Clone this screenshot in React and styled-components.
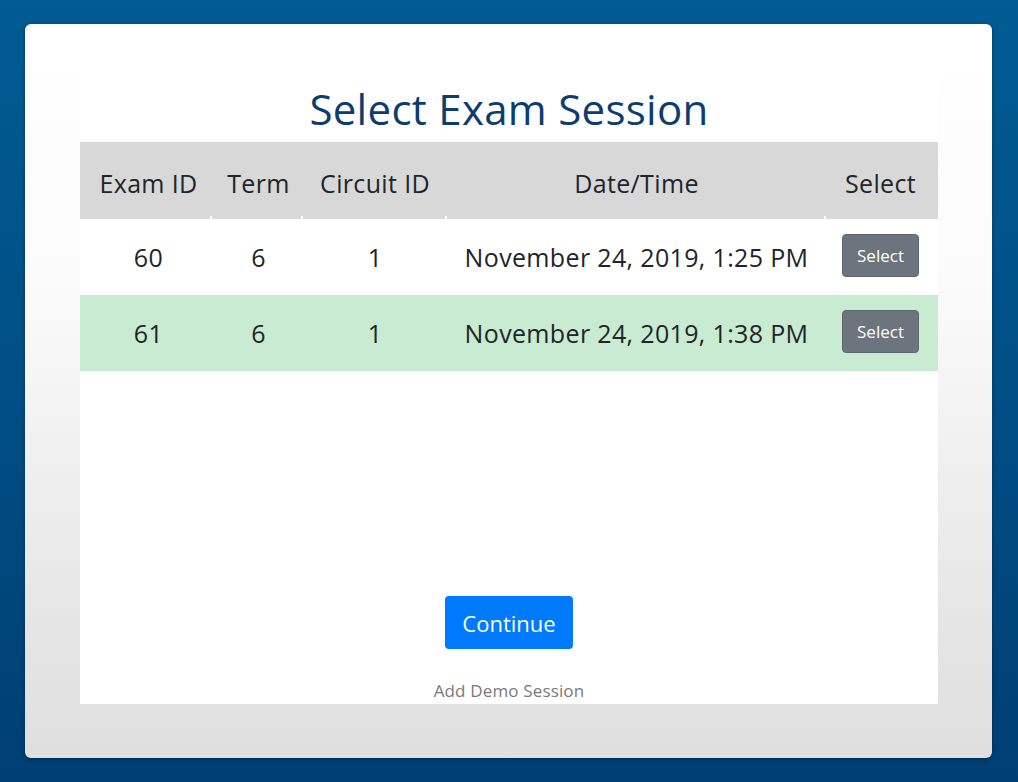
import React from "react";
import styled, { createGlobalStyle } from "styled-components";

const Global = createGlobalStyle`
  html, body { margin: 0; padding: 0; }
  body {
    font-family: "Open Sans", "Noto Sans", sans-serif;
    background: linear-gradient(180deg, #005c93 0%, #004f86 50%, #003f73 100%);
    min-height: 782px;
  }
`;

const Page = styled.div`
  box-sizing: border-box;
  height: 782px;
  padding: 24px 26px 24px 25px;
  display: flex;
`;

const Card = styled.div`
  flex: 1;
  box-sizing: border-box;
  border-radius: 6px;
  background: linear-gradient(180deg, #ffffff 0%, #fbfbfb 35%, #e6e6e6 80%, #dfdfdf 100%);
  box-shadow: 0 1px 4px rgba(0, 0, 0, 0.35);
  padding: 30px 54px 54px 55px;
  display: flex;
`;

const Panel = styled.div`
  flex: 1;
  background: #ffffff;
  display: flex;
  flex-direction: column;
  align-items: center;
`;

const Title = styled.h1`
  margin: 30px 0 8px;
  font-weight: 400;
  font-size: 42px;
  line-height: 50px;
  color: #0d3d6f;
  letter-spacing: 0.3px;
  flex-shrink: 0;
`;

const Table = styled.table`
  width: 100%;
  table-layout: fixed;
  border-collapse: collapse;
  color: #212529;
  font-size: 25px;
  letter-spacing: 0.35px;
  flex-shrink: 0;
`;

const Th = styled.th`
  background: #d8d8d8;
  font-weight: 400;
  height: 77px;
  padding: 5px ${(p) => p.$pr || 0}px 0 ${(p) => p.$pl || 0}px;
  box-sizing: border-box;
  width: ${(p) => p.$w}px;
  position: relative;
`;

const Notch = styled.span`
  position: absolute;
  right: -2px;
  bottom: 0;
  width: 4px;
  height: 3px;
  background: #ffffff;
`;

const Tr = styled.tr`
  background: ${(p) => (p.$active ? "#c8ebd1" : "#ffffff")};
`;

const Td = styled.td`
  box-sizing: border-box;
  height: 76px;
  padding: 0 ${(p) => p.$pr || 0}px ${(p) => p.$pb || 0}px ${(p) => p.$pl || 0}px;
  text-align: center;
`;

const SelectBtn = styled.button`
  font-family: inherit;
  width: 77px;
  height: 43px;
  border: 1px solid #5f676e;
  border-radius: 4px;
  background: #6c757d;
  color: #ffffff;
  font-size: 17px;
  padding: 0;
`;

const Continue = styled.button`
  font-family: inherit;
  flex-shrink: 0;
  margin-top: 225px;
  width: 128px;
  height: 53px;
  border: none;
  border-radius: 4px;
  background: #007bff;
  color: #ffffff;
  font-size: 22px;
  padding: 0;
`;

const DemoLink = styled.a`
  margin-top: 29px;
  font-size: 17px;
  line-height: 26px;
  color: #7a7a7a;
  letter-spacing: 0.15px;
  text-decoration: none;
`;

const cols = [
  { label: "Exam ID", w: 132, pl: 5 },
  { label: "Term", w: 91, pl: 2 },
  { label: "Circuit ID", w: 144 },
  { label: "Date/Time", w: 379 },
  { label: "Select", w: 112, pr: 3 },
];

const rows = [
  { id: 60, term: 6, circuit: 1, date: "November 24, 2019, 1:25 PM", active: false },
  { id: 61, term: 6, circuit: 1, date: "November 24, 2019, 1:38 PM", active: true },
];

export default function App() {
  return (
    <>
      <Global />
      <Page>
        <Card>
          <Panel>
            <Title>Select Exam Session</Title>
            <Table>
              <thead>
                <tr>
                  {cols.map((c, i) => (
                    <Th key={c.label} $w={c.w} $pl={c.pl} $pr={c.pr}>
                      {c.label}
                      {i < cols.length - 1 && <Notch />}
                    </Th>
                  ))}
                </tr>
              </thead>
              <tbody>
                {rows.map((r) => (
                  <Tr key={r.id} $active={r.active}>
                    <Td $pl={5}>{r.id}</Td>
                    <Td $pl={2}>{r.term}</Td>
                    <Td>{r.circuit}</Td>
                    <Td>{r.date}</Td>
                    <Td $pr={3} $pb={4}>
                      <SelectBtn>Select</SelectBtn>
                    </Td>
                  </Tr>
                ))}
              </tbody>
            </Table>
            <Continue>Continue</Continue>
            <DemoLink href="#">Add Demo Session</DemoLink>
          </Panel>
        </Card>
      </Page>
    </>
  );
}
